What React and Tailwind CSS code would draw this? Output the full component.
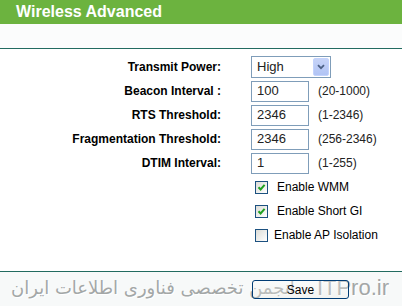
import React from 'react';

const FONT = { fontFamily: '"Liberation Sans", Arial, sans-serif' };

function Label({ children }) {
  return (
    <div className="w-[221px] shrink-0 text-right text-[12px] font-bold text-black">
      {children}
    </div>
  );
}

function TextBox({ value }) {
  return (
    <div className="w-[58px] h-[21px] border border-[#7f9db9] bg-white flex items-center pl-[5px] text-[13px] text-[#222]">
      {value}
    </div>
  );
}

function CheckBox({ checked }) {
  return (
    <div className="w-[13px] h-[13px] border border-[#1c5180] bg-gradient-to-br from-[#dcdcd7] to-white flex items-center justify-center">
      {checked && (
        <svg width="9" height="9" viewBox="0 0 9 9">
          <path d="M1.5 4.2 L3.6 6.4 L7.6 1.8" fill="none" stroke="#21a121" strokeWidth="2" />
        </svg>
      )}
    </div>
  );
}

function Row({ label, children }) {
  return (
    <div className="h-[24px] flex items-center">
      <Label>{label}</Label>
      <div className="ml-[30px] flex items-center">{children}</div>
    </div>
  );
}

function CheckRow({ checked, text, gap }) {
  return (
    <div className="h-[24px] flex items-center pl-[255px]">
      <CheckBox checked={checked} />
      <span className={`${gap} text-[12px] text-black`}>{text}</span>
    </div>
  );
}

export default function App() {
  return (
    <div className="relative w-[402px] h-[306px] bg-white overflow-hidden" style={FONT}>
      <div className="h-[24px] bg-[#6cb33f] flex items-center pl-4">
        <h1 className="text-[16px] font-bold text-white leading-none">Wireless Advanced</h1>
      </div>
      <div className="h-[24px] bg-[#fbfcfc]" />
      <div className="h-px bg-[#226b60]" />

      <div className="pt-[6px]">
        <Row label="Transmit Power:">
          <div className="w-[80px] h-[22px] border border-[#7f9db9] bg-white flex items-center justify-between pl-[5px] pr-px">
            <span className="text-[13px] text-[#222]">High</span>
            <div className="w-[16px] h-[18px] rounded-[2px] bg-gradient-to-b from-[#c6d3f7] to-[#b1c4f5] border border-[#c3d3fd] flex items-center justify-center">
              <svg width="8" height="6" viewBox="0 0 8 6">
                <path d="M1 1.2 L4 4.2 L7 1.2" fill="none" stroke="#4d6185" strokeWidth="1.8" />
              </svg>
            </div>
          </div>
        </Row>
        <Row label="Beacon Interval :">
          <TextBox value="100" />
          <span className="ml-[9px] text-[12px] text-[#222]">(20-1000)</span>
        </Row>
        <Row label="RTS Threshold:">
          <TextBox value="2346" />
          <span className="ml-[9px] text-[12px] text-[#222]">(1-2346)</span>
        </Row>
        <Row label="Fragmentation Threshold:">
          <TextBox value="2346" />
          <span className="ml-[9px] text-[12px] text-[#222]">(256-2346)</span>
        </Row>
        <Row label="DTIM Interval:">
          <TextBox value="1" />
          <span className="ml-[9px] text-[12px] text-[#222]">(1-255)</span>
        </Row>
        <CheckRow checked text="Enable WMM" gap="ml-[9px]" />
        <CheckRow checked text="Enable Short GI" gap="ml-[9px]" />
        <CheckRow checked={false} text="Enable AP Isolation" gap="ml-[6px]" />
      </div>

      <div className="mt-[24px] h-px bg-[#226b60]" />
      <div className="h-[35px] bg-[#f7f9f9]" />

      {/* watermark over the footer */}
      <div className="absolute left-0 right-[13px] top-[276px] h-[24px] flex items-center justify-end gap-[22px] whitespace-nowrap text-[#a3a7a7] pointer-events-none"
        style={{ textShadow: '0 0 1px #fff, 1px 1px 0 #fff' }}>
        <span dir="rtl" className="text-[18px] leading-none" style={{ fontFamily: '"DejaVu Sans", sans-serif' }}>
          انجمن تخصصی فناوری اطلاعات ایران
        </span>
        <span className="text-[22px] leading-none" style={FONT}>ITPro.ir</span>
      </div>

      <button className="absolute left-[252px] top-[280px] w-[97px] h-[19px] rounded-[3px] border border-[#003c74] bg-gradient-to-b from-white/30 to-[#e6e6e0]/30 text-[12px] text-black leading-none">
        Save
      </button>
    </div>
  );
}
